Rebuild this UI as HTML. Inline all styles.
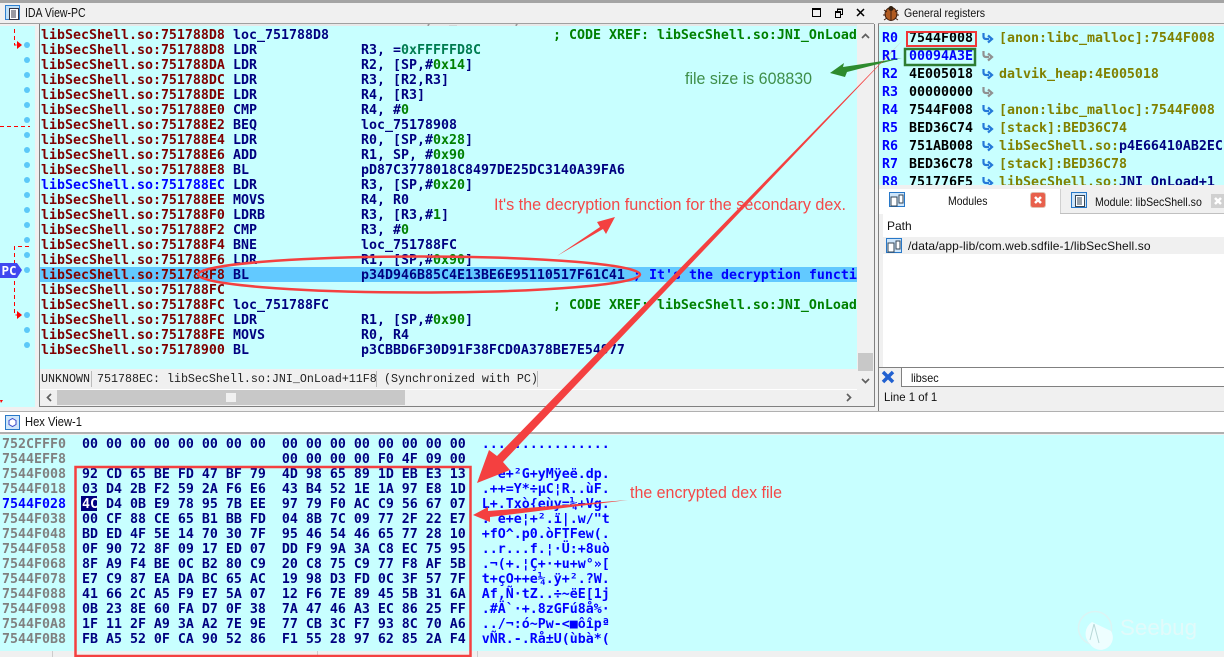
<!DOCTYPE html>
<html><head><meta charset="utf-8"><style>
html,body{margin:0;padding:0;width:1224px;height:657px;overflow:hidden;background:#f0f0f0}
div,span,pre{position:absolute;margin:0;padding:0}
.mono{font:bold 13.29px/15px "DejaVu Sans Mono","Liberation Mono",monospace;white-space:pre}
.ui{font:12px/16px "Liberation Sans",sans-serif;color:#111;white-space:pre;transform-origin:0 50%}
.st{font:11.670px/16px "Liberation Mono",monospace;color:#222;white-space:pre}
.r{left:1px;width:816px;height:15px;color:#800000}
.r span{color:#000080;top:0}
.m{left:192px}.o{left:320px}
.r .c{left:512px;color:#008000}
.r b{font-weight:bold;color:#008000}
.r u{text-decoration:none;color:#007c50}
.a{color:#808080}.as{color:#0000ff}
pre span{position:static}
.g{color:#00f}.v{color:#000}.t{color:#808000}.t i{font-style:normal;color:#000080}
</style></head><body>
<!-- top chrome -->
<div style="left:0;top:0;width:1224px;height:3px;background:#a4a4a4"></div>
<div style="left:0;top:3px;width:878px;height:20px;background:#f0f0f0"></div>
<div style="left:0;top:23px;width:874px;height:1px;background:#a0a0a0"></div>
<svg style="position:absolute;left:5px;top:5px" width="16" height="16" viewBox="0 0 16 16"><rect x=".5" y=".5" width="14" height="14" fill="#bfe0f8" stroke="#2f80d0"/><rect x="4.5" y="3.5" width="9" height="11" fill="#fff" stroke="#334"/><path d="M6 6h5M6 8h5M6 10h5M6 12h5" stroke="#334"/></svg>
<div class="ui" style="left:25px;top:5px;font-size:13px;transform:scaleX(.81)">IDA View-PC</div>
<svg style="position:absolute;left:810px;top:5px" width="60" height="16" viewBox="0 0 60 16" fill="none" stroke="#000"><rect x="2.5" y="3.5" width="8" height="8" stroke-width="1"/><path d="M2 4h9" stroke-width="2"/><path d="M25.5 7.5h5v5h-5zM27.5 7V4.500h5v5H31" stroke-width="1"/><path d="M25 6.500h6M27 4h6" stroke-width="1"/><path d="M47 4l7 7M54 4l-7 7" stroke-width="1.500"/></svg>

<!-- gutter + listing -->
<div style="left:0;top:26px;width:35px;height:381px;background:#c8ffff"></div>
<div style="left:35px;top:24px;width:4px;height:383px;background:#f0f0f0"></div>
<div style="left:39px;top:24px;width:1px;height:383px;background:#808080"></div>
<div style="left:40px;top:26px;width:817px;height:344px;background:#c8ffff"></div>
<div style="left:40px;top:24px;width:817px;height:2px;overflow:hidden;background:#e8e8e8"><div class="mono" style="left:1px;top:-11px;color:#999">libSecShell.so:751788D6<span style="left:384px">; x_comment; function</span></div></div>
<div style="left:40px;top:267px;width:817px;height:15px;background:#62c9ff"></div>

<div class="mono" style="left:40px;top:28px;width:817px;height:342px;overflow:hidden">
<div class="r" style="top:0">libSecShell.so:751788D8<span class="m">loc_751788D8</span><span class="c">; CODE XREF: libSecShell.so:JNI_OnLoad</span></div>
<div class="r" style="top:15px">libSecShell.so:751788D8<span class="m">LDR</span><span class="o">R3, =<u>0xFFFFFD8C</u></span></div>
<div class="r" style="top:30px">libSecShell.so:751788DA<span class="m">LDR</span><span class="o">R2, [SP,#<b>0x14</b>]</span></div>
<div class="r" style="top:45px">libSecShell.so:751788DC<span class="m">LDR</span><span class="o">R3, [R2,R3]</span></div>
<div class="r" style="top:60px">libSecShell.so:751788DE<span class="m">LDR</span><span class="o">R4, [R3]</span></div>
<div class="r" style="top:75px">libSecShell.so:751788E0<span class="m">CMP</span><span class="o">R4, #<b>0</b></span></div>
<div class="r" style="top:90px">libSecShell.so:751788E2<span class="m">BEQ</span><span class="o">loc_75178908</span></div>
<div class="r" style="top:105px">libSecShell.so:751788E4<span class="m">LDR</span><span class="o">R0, [SP,#<b>0x28</b>]</span></div>
<div class="r" style="top:120px">libSecShell.so:751788E6<span class="m">ADD</span><span class="o">R1, SP, #<b>0x90</b></span></div>
<div class="r" style="top:135px">libSecShell.so:751788E8<span class="m">BL</span><span class="o">pD87C3778018C8497DE25DC3140A39FA6</span></div>
<div class="r" style="top:150px;color:#00f">libSecShell.so:751788EC<span class="m">LDR</span><span class="o">R3, [SP,#<b>0x20</b>]</span></div>
<div class="r" style="top:165px">libSecShell.so:751788EE<span class="m">MOVS</span><span class="o">R4, R0</span></div>
<div class="r" style="top:180px">libSecShell.so:751788F0<span class="m">LDRB</span><span class="o">R3, [R3,#<b>1</b>]</span></div>
<div class="r" style="top:195px">libSecShell.so:751788F2<span class="m">CMP</span><span class="o">R3, #<b>0</b></span></div>
<div class="r" style="top:210px">libSecShell.so:751788F4<span class="m">BNE</span><span class="o">loc_751788FC</span></div>
<div class="r" style="top:225px">libSecShell.so:751788F6<span class="m">LDR</span><span class="o">R1, [SP,#<b>0x90</b>]</span></div>
<div class="r" style="top:240px">libSecShell.so:751788F8<span class="m">BL</span><span class="o">p34D946B85C4E13BE6E95110517F61C41</span><span style="left:592px;color:#00f">; It's the decryption functi</span></div>
<div class="r" style="top:255px">libSecShell.so:751788FC</div>
<div class="r" style="top:270px">libSecShell.so:751788FC<span class="m">loc_751788FC</span><span class="c">; CODE XREF: libSecShell.so:JNI_OnLoad</span></div>
<div class="r" style="top:285px">libSecShell.so:751788FC<span class="m">LDR</span><span class="o">R1, [SP,#<b>0x90</b>]</span></div>
<div class="r" style="top:300px">libSecShell.so:751788FE<span class="m">MOVS</span><span class="o">R0, R4</span></div>
<div class="r" style="top:315px">libSecShell.so:75178900<span class="m">BL</span><span class="o">p3CBBD6F30D91F38FCD0A378BE7E54977</span></div>
</div>

<!-- gutter graphics -->
<svg style="position:absolute;left:0;top:24px" width="36" height="390" viewBox="0 24 36 390">
<g fill="#5cc8f8"><circle cx="27" cy="45" r="3"/><circle cx="27" cy="60" r="3"/><circle cx="27" cy="75" r="3"/><circle cx="27" cy="90" r="3"/><circle cx="27" cy="105" r="3"/><circle cx="27" cy="120" r="3"/><circle cx="27" cy="135" r="3"/><circle cx="27" cy="150" r="3"/><circle cx="27" cy="165" r="3"/><circle cx="27" cy="180" r="3"/><circle cx="27" cy="195" r="3"/><circle cx="27" cy="210" r="3"/><circle cx="27" cy="225" r="3"/><circle cx="27" cy="240" r="3"/><circle cx="27" cy="255" r="3"/><circle cx="27" cy="270" r="3"/><circle cx="27" cy="315" r="3"/><circle cx="27" cy="330" r="3"/><circle cx="27" cy="345" r="3"/></g>
<g fill="none" stroke="#f00" stroke-dasharray="4 3"><path d="M14.500 29V45H17"/><path d="M0 126.500H30"/><path d="M29 246.500H14.500V315H17"/></g>
<path d="M17 41l5 4-5 4zM17 311l5 4-5 4zM0 400h3l-2 3z" fill="#f00"/>
<path d="M0 263H17L22 270 17 278H0z" fill="#4048f0"/>
</svg>
<div class="mono" style="left:1.500px;top:263px;color:#fff;font-size:12.500px;line-height:15px;height:15px">PC</div>

<!-- listing scrollbars/status -->
<div style="left:857px;top:24px;width:17px;height:382px;background:#f0f0f0"></div>
<div style="left:858px;top:353px;width:15px;height:18px;background:#c8c8c8"></div>
<div style="left:874px;top:24px;width:1px;height:383px;background:#808080"></div>
<div style="left:40px;top:369px;width:817px;height:21px;background:#f0f0f0"></div>
<div class="st" style="left:41px;top:371px">UNKNOWN</div>
<div style="left:91px;top:371px;width:1px;height:16px;background:#bbb"></div>
<div class="st" style="left:97px;top:371px">751788EC: libSecShell.so:JNI_OnLoad+11F8</div>
<div style="left:376px;top:371px;width:1px;height:16px;background:#bbb"></div>
<div class="st" style="left:384px;top:371px">(Synchronized with PC)</div>
<div style="left:537px;top:371px;width:1px;height:16px;background:#bbb"></div>
<div style="left:40px;top:389px;width:817px;height:1px;background:#fff"></div>
<div style="left:40px;top:390px;width:834px;height:16px;background:#f0f0f0"></div>
<div style="left:57px;top:390px;width:348px;height:15px;background:#c8c8c8"></div>
<div style="left:226px;top:393px;width:10px;height:9px;background:#f0f0f0"></div>
<div style="left:39px;top:406px;width:836px;height:1px;background:#808080"></div>
<svg style="position:absolute;left:40px;top:26px" width="834" height="380" viewBox="40 26 834 380" fill="none" stroke="#606060" stroke-width="1.700"><path d="M862 38l3.500-3.500 3.500 3.500"/><path d="M862 379l3.500 3.500 3.500-3.500"/><path d="M51 394l-3.500 3.500 3.500 3.500"/><path d="M847 394l3.500 3.500-3.500 3.500"/></svg>

<!-- right top panel -->
<div style="left:875px;top:0;width:3px;height:411px;background:#f0f0f0"></div>
<div style="left:875px;top:0;width:349px;height:3px;background:#a4a4a4"></div>
<div style="left:878px;top:23px;width:346px;height:1px;background:#a0a0a0"></div>
<svg style="position:absolute;left:883px;top:5px" width="16" height="16" viewBox="0 0 16 16"><ellipse cx="8" cy="9" rx="6" ry="6.500" fill="#b05a20" stroke="#402010"/><circle cx="8" cy="3.500" r="2.500" fill="#302010"/><path d="M8 3v12M1 5l3 2M15 5l-3 2M0 10h3M16 10h-3M1 15l3-2M15 15l-3-2" stroke="#402010"/></svg>
<div class="ui" style="left:904px;top:5px;transform:scaleX(.88)">General registers</div>
<div style="left:878px;top:24px;width:1px;height:387px;background:#808080"></div>
<div style="left:879px;top:26px;width:345px;height:159px;background:#c8ffff;overflow:hidden" class="mono">
<div class="g" style="left:3px;top:5px">R0</div><div class="v" style="left:30px;top:5px">7544F008</div><div class="t" style="left:120px;top:5px">[anon:libc_malloc]:7544F008</div>
<div class="g" style="left:3px;top:23px">R1</div><div class="v" style="left:30px;top:23px;color:#00f">00094A3E</div>
<div class="g" style="left:3px;top:41px">R2</div><div class="v" style="left:30px;top:41px">4E005018</div><div class="t" style="left:120px;top:41px">dalvik_heap:4E005018</div>
<div class="g" style="left:3px;top:59px">R3</div><div class="v" style="left:30px;top:59px">00000000</div>
<div class="g" style="left:3px;top:77px">R4</div><div class="v" style="left:30px;top:77px">7544F008</div><div class="t" style="left:120px;top:77px">[anon:libc_malloc]:7544F008</div>
<div class="g" style="left:3px;top:95px">R5</div><div class="v" style="left:30px;top:95px">BED36C74</div><div class="t" style="left:120px;top:95px">[stack]:BED36C74</div>
<div class="g" style="left:3px;top:113px">R6</div><div class="v" style="left:30px;top:113px">751AB008</div><div class="t" style="left:120px;top:113px">libSecShell.so:<i>p4E66410AB2EC</i></div>
<div class="g" style="left:3px;top:131px">R7</div><div class="v" style="left:30px;top:131px">BED36C78</div><div class="t" style="left:120px;top:131px">[stack]:BED36C78</div>
<div class="g" style="left:3px;top:149px">R8</div><div class="v" style="left:30px;top:149px">751776F5</div><div class="t" style="left:120px;top:149px">libSecShell.so:<i>JNI_OnLoad+1</i></div>
</div>
<svg style="position:absolute;left:979px;top:26px" width="18" height="159" viewBox="0 26 18 159" fill="none" stroke-width="2.200">
<defs><path id="ar" d="M4.500-5V-1.500Q4.500 1 7 1H10M9 -2.500L13 1 9 4.500"/></defs>
<use href="#ar" y="38" stroke="#2478d8"/><use href="#ar" y="56" stroke="#909090"/><use href="#ar" y="74" stroke="#2478d8"/><use href="#ar" y="92" stroke="#909090"/><use href="#ar" y="110" stroke="#2478d8"/><use href="#ar" y="128" stroke="#2478d8"/><use href="#ar" y="146" stroke="#2478d8"/><use href="#ar" y="164" stroke="#2478d8"/><use href="#ar" y="182" stroke="#2478d8"/></svg>

<!-- modules tabs -->
<div style="left:879px;top:185px;width:345px;height:28px;background:#f0f0f0"></div>
<div style="left:879px;top:189px;width:181px;height:25px;background:#fff"></div>
<div style="left:1060px;top:213px;width:164px;height:1px;background:#c0c0c0"></div>
<div style="left:1060px;top:189px;width:1px;height:24px;background:#d0d0d0"></div>
<svg style="position:absolute;left:889px;top:192px" width="18" height="16" viewBox="0 0 18 16"><rect x=".5" y=".5" width="15" height="14" fill="#cfe6fa" stroke="#2878c8"/><rect x="2" y="5" width="6" height="9" fill="#fff" stroke="#345"/><rect x="10" y="3" width="4" height="8" fill="#fff" stroke="#345"/></svg>
<div class="ui" style="left:948px;top:193px;transform:scaleX(.87)">Modules</div>
<div style="left:1031px;top:193px;width:14px;height:14px;background:#e8604c;border-radius:2px;box-shadow:0 0 0 1px #e0c0b0"></div>
<svg style="position:absolute;left:1031px;top:193px" width="14" height="14"><path d="M4 4l6 6M10 4l-6 6" stroke="#fff" stroke-width="2.500"/></svg>
<svg style="position:absolute;left:1071px;top:192px" width="17" height="17" viewBox="0 0 17 17"><rect x=".5" y=".5" width="15" height="15" fill="#cfe6fa" stroke="#2878c8"/><rect x="4.500" y="3.500" width="9" height="11" fill="#fff" stroke="#345"/><path d="M6 6h5M6 8h5M6 10h5M6 12h5" stroke="#345"/></svg>
<div class="ui" style="left:1095px;top:194px;transform:scaleX(.88)">Module: libSecShell.so</div>
<div style="left:1211px;top:194px;width:13px;height:14px;background:#d0d0d0"></div>
<svg style="position:absolute;left:1211px;top:194px" width="13" height="14"><path d="M4 4l6 6M10 4l-6 6" stroke="#fff" stroke-width="2.500"/></svg>

<div style="left:879px;top:214px;width:345px;height:153px;background:#fff"></div>
<div style="left:879px;top:214px;width:4px;height:153px;background:#f0f0f0"></div>
<div class="ui" style="left:887px;top:218px">Path</div>
<div style="left:883px;top:237px;width:341px;height:17px;background:#f0f0f0"></div>
<svg style="position:absolute;left:886px;top:238px" width="18" height="16" viewBox="0 0 18 16"><rect x=".5" y=".5" width="15" height="14" fill="#cfe6fa" stroke="#2878c8"/><rect x="2" y="5" width="6" height="9" fill="#fff" stroke="#345"/><rect x="10" y="3" width="4" height="8" fill="#fff" stroke="#345"/></svg>
<div class="ui" style="left:908px;top:238px;letter-spacing:.1px">/data/app-lib/com.web.sdfile-1/libSecShell.so</div>

<!-- filter -->
<div style="left:879px;top:367px;width:345px;height:1px;background:#808080"></div>
<svg style="position:absolute;left:881px;top:370px" width="14" height="14" viewBox="0 0 14 14"><path d="M2 2l10 10M12 2L2 12" stroke="#2060d0" stroke-width="3.500"/></svg>
<div style="left:901px;top:368px;width:323px;height:19px;background:#fff"></div>
<div style="left:901px;top:368px;width:1px;height:19px;background:#808080"></div>
<div style="left:901px;top:386px;width:323px;height:1px;background:#808080"></div>
<div class="ui" style="left:911px;top:370px;transform:scaleX(.9)">libsec</div>
<div class="ui" style="left:884px;top:389px;transform:scaleX(.95)">Line 1 of 1</div>

<!-- hex title -->
<div style="left:0;top:411px;width:1224px;height:1px;background:#b0b0b0"></div>
<div style="left:0;top:412px;width:1224px;height:20px;background:#fff"></div>
<div style="left:0;top:432px;width:1224px;height:2px;background:#b0b0b0"></div>
<svg style="position:absolute;left:5px;top:415px" width="15" height="15" viewBox="0 0 15 15"><rect x=".5" y=".5" width="14" height="14" fill="#cfe6fa" stroke="#2878c8"/><path d="M7.500 3.500l3.500 2v4l-3.500 2-3.500-2v-4z" fill="#fff" stroke="#3848c8"/></svg>
<div class="ui" style="left:25px;top:414px;font-size:13px;transform:scaleX(.86)">Hex View-1</div>

<!-- hex pane -->
<div style="left:0;top:435px;width:1224px;height:216px;background:#c8ffff"></div>
<div style="left:81px;top:496px;width:16px;height:15px;background:#000080"></div>
<pre class="mono" style="left:2px;top:437px;color:#000080"><span class="a">752CFFF0  </span>00 00 00 00 00 00 00 00  00 00 00 00 00 00 00 00  <span class="as">................</span>
<span class="a">7544EFF8  </span>                         00 00 00 00 F0 4F 09 00
<span class="a">7544F008  </span>92 CD 65 BE FD 47 BF 79  4D 98 65 89 1D EB E3 13  <span class="as">.-e+²G+yMÿeë.dp.</span>
<span class="a">7544F018  </span>03 D4 2B F2 59 2A F6 E6  43 B4 52 1E 1A 97 E8 1D  <span class="as">.++=Y*÷µC¦R..ùF.</span>
<span style="color:#00f">7544F028  </span><span style="color:#fff">4C</span> D4 0B E9 78 95 7B EE  97 79 F0 AC C9 56 67 07  <span class="as">L+.Txò{eùy=¼+Vg.</span>
<span class="a">7544F038  </span>00 CF 88 CE 65 B1 BB FD  04 8B 7C 09 77 2F 22 E7  <span class="as">.¯e+e¦+².ï|.w/"t</span>
<span class="a">7544F048  </span>BD ED 4F 5E 14 70 30 7F  95 46 54 46 65 77 28 10  <span class="as">+fO^.p0.òFTFew(.</span>
<span class="a">7544F058  </span>0F 90 72 8F 09 17 ED 07  DD F9 9A 3A C8 EC 75 95  <span class="as">..r...f.¦·Ü:+8uò</span>
<span class="a">7544F068  </span>8F A9 F4 BE 0C B2 80 C9  20 C8 75 C9 77 F8 AF 5B  <span class="as">.¬(+.¦Ç+·+u+w°»[</span>
<span class="a">7544F078  </span>E7 C9 87 EA DA BC 65 AC  19 98 D3 FD 0C 3F 57 7F  <span class="as">t+çO++e¼.ÿ+².?W.</span>
<span class="a">7544F088  </span>41 66 2C A5 F9 E7 5A 07  12 F6 7E 89 45 5B 31 6A  <span class="as">Af,Ñ·tZ..÷~ëE[1j</span>
<span class="a">7544F098  </span>0B 23 8E 60 FA D7 0F 38  7A 47 46 A3 EC 86 25 FF  <span class="as">.#Ä`·+.8zGFú8å%·</span>
<span class="a">7544F0A8  </span>1F 11 2F A9 3A A2 7E 9E  77 CB 3C F7 93 8C 70 A6  <span class="as">../¬:ó~Pw-&lt;■ôîpª</span>
<span class="a">7544F0B8  </span>FB A5 52 0F CA 90 52 86  F1 55 28 97 62 85 2A F4  <span class="as">vÑR.-.Rå±U(ùbà*(</span></pre>
<div style="left:52px;top:651px;width:1px;height:6px;background:#ccc"></div>
<div style="left:317px;top:651px;width:1px;height:6px;background:#ccc"></div>
<div style="left:477px;top:651px;width:1px;height:6px;background:#ccc"></div>

<!-- annotations -->
<svg style="position:absolute;left:0;top:0" width="1224" height="657" viewBox="0 0 1224 657">
<g fill="none"><rect x="907" y="32" width="69" height="14" stroke="#f03838" stroke-width="2"/><rect x="905" y="49" width="70" height="16" stroke="#2e7d32" stroke-width="2.500"/>
<ellipse cx="419" cy="274.500" rx="221" ry="18" stroke="#f44040" stroke-width="2.500"/>
<rect x="75.500" y="467" width="395" height="189" stroke="#f44040" stroke-width="2.500"/></g>
<path d="M830 73L844 63 843 67 902 58 847 72 845 77z" fill="#2e8b2e"/>
<path d="M903 40L503 462 510 470 477 483 489 450 497 456z" fill="#f44040"/>
<path d="M557 256L600 227 597 222 615 217 606 234 603 229z" fill="#f44040"/>
<path d="M473 515L488 507 488 511 628 500 490 517 490 522z" fill="#f44040"/>
<g font-family="Liberation Sans,sans-serif" font-size="17">
<text x="685" y="84" fill="#3f8f4a" textLength="127" lengthAdjust="spacingAndGlyphs">file size is 608830</text>
<text x="494" y="210" fill="#f44848" textLength="352" lengthAdjust="spacingAndGlyphs">It's the decryption function for the secondary dex.</text>
<text x="630" y="498" fill="#f44848" textLength="152" lengthAdjust="spacingAndGlyphs">the encrypted dex file</text>
</g>
<!-- watermark -->
<g><circle cx="1095" cy="628" r="16.500" fill="none" stroke="#dcf4f4" stroke-width="1.500"/><path d="M1092 622L1111 631A12 12 0 0 1 1090 644A14 14 0 0 1 1092 622z" fill="#eefeff"/><path d="M1094 624L1099 643M1094 624L1090 640" stroke="#b8d8d8" stroke-width="1" fill="none"/><text x="1120" y="635" font-family="Liberation Sans,sans-serif" font-size="22" fill="#e2fafa" textLength="77" lengthAdjust="spacingAndGlyphs">Seebug</text></g>
</svg>
</body></html>
